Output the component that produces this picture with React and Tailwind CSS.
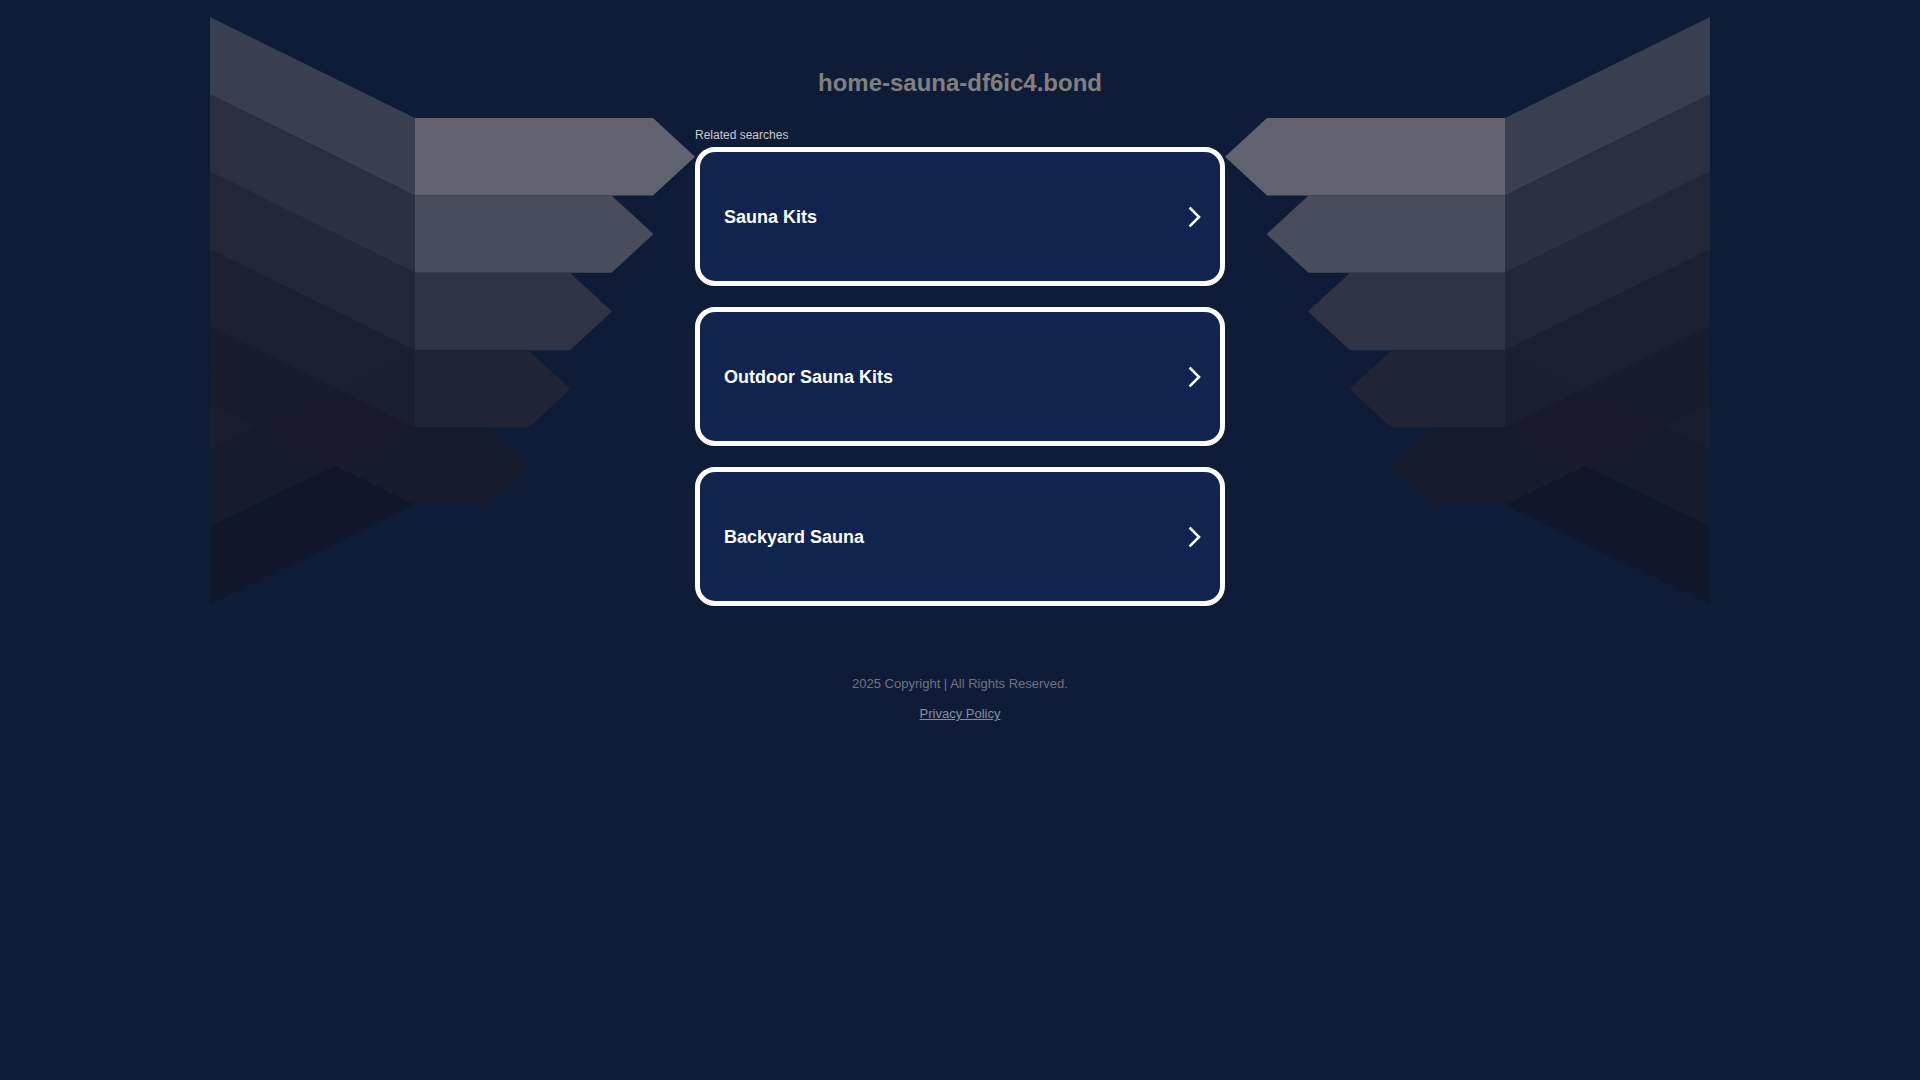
import React from "react";

const searches = ["Sauna Kits", "Outdoor Sauna Kits", "Backyard Sauna"];

// wing rows, page coords (left wing), right wing is the same drawing mirrored
const ROW_H = 77.4;
const rects = ["#60636f", "#494c5c", "#2f3345", "#202436", "#151a2c"];
const ups = ["#3f4354", "#2f3243", "#252838", "#1d2032", "#191c2e"];
const downs = ["#262635", "#232331", "#211f2c", "#1a1a27", "#131321"];

function Wing({ flip }) {
  const rows = [0, 1, 2, 3, 4].map((i) => {
    const yt = 118 + ROW_H * i;
    const yb = yt + ROW_H;
    const xr = 653 - 41.5 * i;
    return { i, yt, yb, xr, xt: xr + 42 };
  });

  return (
    <svg
      width="485"
      height="620"
      viewBox="210 0 485 620"
      className={flip ? "shrink-0 -scale-x-100" : "shrink-0"}
    >
      {/* bands going down toward the outer edge */}
      {rows.map((r) => (
        <polygon
          key={`d${r.i}`}
          points={`210,${r.yt + 99} 415,${r.yt} 415,${r.yb} 210,${r.yb + 99}`}
          fill={downs[r.i]}
          fillOpacity="0.6"
        />
      ))}
      {/* bands going up toward the outer edge */}
      {rows.map((r) => (
        <polygon
          key={`u${r.i}`}
          points={`210,${r.yt - 101} 415,${r.yt} 415,${r.yb} 210,${r.yb - 101}`}
          fill={ups[r.i]}
          fillOpacity="0.9"
        />
      ))}
      {/* arrow shaped rows */}
      {rows.map((r) => (
        <polygon
          key={`r${r.i}`}
          points={`415,${r.yt} ${r.xr},${r.yt} ${r.xt},${(r.yt + r.yb) / 2} ${r.xr},${r.yb} 415,${r.yb}`}
          fill={rects[r.i]}
        />
      ))}
    </svg>
  );
}

function Chevron() {
  return (
    <svg width="14" height="22" viewBox="0 0 14 22" className="shrink-0">
      <polyline
        points="2.5,2.5 11,11 2.5,19.5"
        fill="none"
        stroke="#ffffff"
        strokeWidth="2.6"
        strokeLinecap="square"
      />
    </svg>
  );
}

export default function App() {
  return (
    <div
      className="min-h-screen bg-[#0f1c38] flex flex-col"
      style={{ fontFamily: '"Liberation Sans", Arial, sans-serif' }}
    >
      <div className="flex justify-center items-start">
        <Wing />

        <div className="w-[530px] shrink-0 flex flex-col">
          <h1 className="pt-[69px] text-center text-[24px] leading-[28px] font-bold text-[#808080]">
            home-sauna-df6ic4.bond
          </h1>
          <p className="mt-[31px] text-[12px] leading-[14px] text-[#c8c9cc]">
            Related searches
          </p>

          {/* Search cards */}
          <div className="mt-[5px] flex flex-col gap-[21px]">
            {searches.map((s) => (
              <a
                key={s}
                href="#"
                className="h-[139px] flex items-center justify-between pl-6 pr-[18px] rounded-[20px] border-[5px] border-white bg-[#112450]"
              >
                <span className="pt-px text-[18px] font-bold text-white">{s}</span>
                <Chevron />
              </a>
            ))}
          </div>
        </div>

        <Wing flip />
      </div>

      {/* Footer */}
      <footer className="mt-[56px] flex flex-col items-center">
        <p className="text-[13px] leading-[16px] text-[#6f7482]">
          2025 Copyright | All Rights Reserved.
        </p>
        <a
          href="#"
          className="mt-[14px] text-[13px] leading-[16px] text-[#8a8d99] underline"
        >
          Privacy Policy
        </a>
      </footer>
    </div>
  );
}
